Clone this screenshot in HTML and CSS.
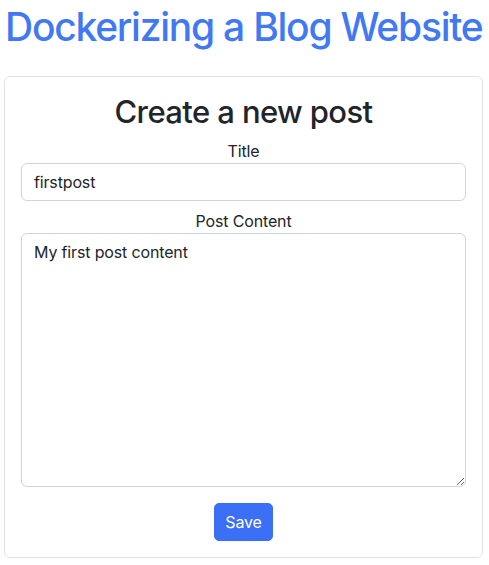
FILE: index.html
```html
<!DOCTYPE html>
<html lang="en">
<head>
<meta charset="utf-8">
<title>Dockerizing a Blog Website</title>
<link rel="stylesheet" href="styles.css">
</head>
<body>
<div class="page">
  <h1 class="site-title">Dockerizing a Blog Website</h1>
  <form class="card">
    <h2 class="card-title">Create a new post</h2>
    <label class="field-label" for="title">Title</label>
    <input class="field-input" id="title" type="text" value="firstpost">
    <label class="field-label" for="content">Post Content</label>
    <textarea class="field-textarea" id="content">My first post content</textarea>
    <div class="actions">
      <button class="btn-save" type="button">Save</button>
    </div>
  </form>
</div>
</body>
</html>
```

FILE: styles.css
```css
* { box-sizing: border-box; }
html, body { margin: 0; padding: 0; background: #fff; }
body {
  font-family: Inter, "Noto Sans", "Liberation Sans", sans-serif;
  color: #212529;
  font-size: 16px;
  line-height: 1.5;
  letter-spacing: -0.15px;
}
.page {
  display: flex;
  flex-direction: column;
  padding: 3px 6px 0 4px;
}
.site-title {
  margin: 0 0 0 1px;
  font-size: 39px;
  font-weight: 500;
  line-height: 48px;
  color: #4079f1;
  letter-spacing: -1.25px;
  white-space: nowrap;
}
.card {
  margin-top: 25px;
  border: 1px solid #dee2e6;
  border-radius: 6px;
  padding: 16px;
  display: flex;
  flex-direction: column;
}
.card-title {
  margin: 0 0 8px;
  text-align: center;
  font-size: 31px;
  font-weight: 500;
  line-height: 38px;
  letter-spacing: -0.6px;
}
.field-label {
  text-align: center;
  display: block;
}
.field-input, .field-textarea {
  font: inherit;
  letter-spacing: inherit;
  color: #212529;
  border: 1px solid #ced4da;
  border-radius: 6px;
  padding: 6px 12px;
  background: #fff;
  width: 100%;
}
.field-input { height: 38px; margin-bottom: 8px; }
.field-textarea { height: 254px; resize: vertical; }
.actions {
  display: flex;
  justify-content: center;
  margin-top: 16px;
}
.btn-save {
  font: inherit;
  letter-spacing: inherit;
  color: #fff;
  background: #3b6ff6;
  border: 1px solid #3b6ff6;
  border-radius: 5px;
  height: 38px;
  padding: 0 10.5px;
}
```
